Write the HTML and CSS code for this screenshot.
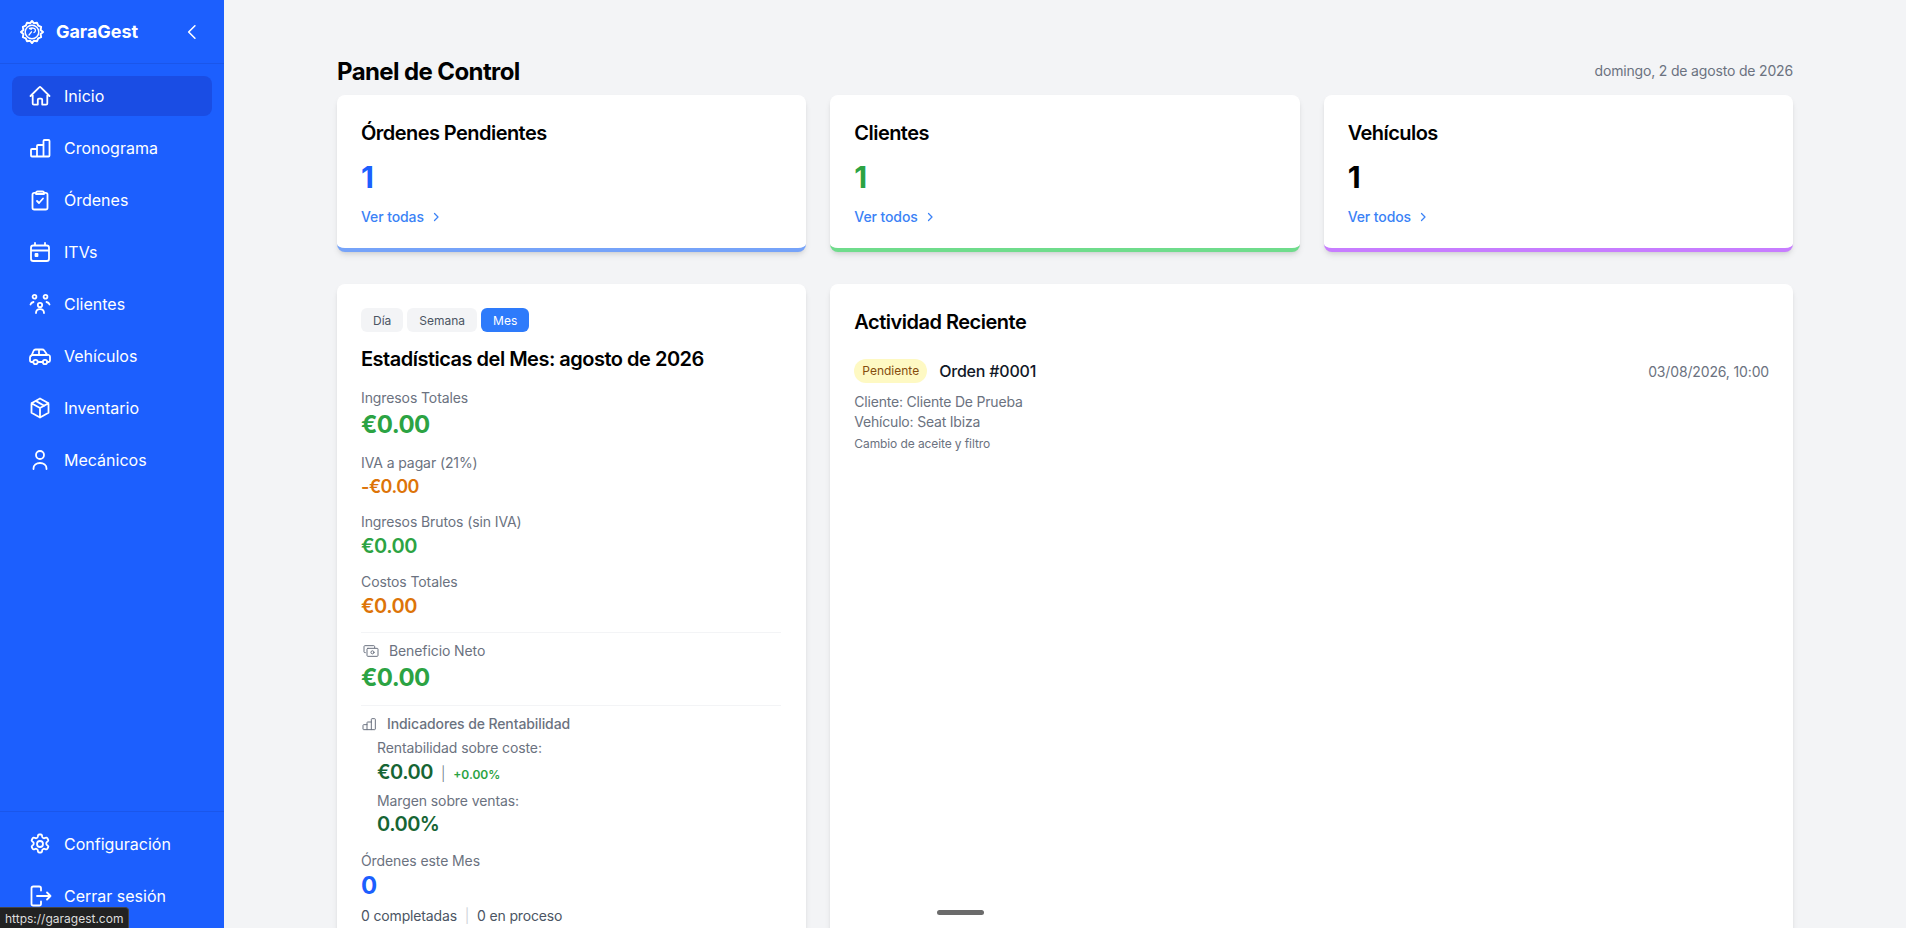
FILE: index.html
```html
<!DOCTYPE html>
<html lang="es">
<head>
    <meta charset="UTF-8">
    <meta name="viewport" content="width=device-width, initial-scale=1.0">
    <title>GaraGest</title>
    <link rel="stylesheet" href="styles.css">
</head>
<body>
<div class="app">
    <aside class="sidebar">
        <div class="brand">
            <div class="brand-left">
                <svg class="logo" viewBox="0 0 24 24" fill="none" stroke="currentColor" stroke-linecap="round" stroke-linejoin="round">
                    <path d="M12 1l2 2.300 3-.5 1.200 2.900 2.900 1.200-.5 3L23 12l-2.400 2.100.5 3-2.900 1.200-1.200 2.900-3-.5L12 23l-2-2.300-3 .5-1.200-2.900-2.900-1.200.5-3L1 12l2.400-2.100-.5-3 2.900-1.200L7 2.800l3 .5z" stroke-width="2"/>
                    <circle cx="12" cy="12" r="6.800" stroke-width="1.500"/>
                    <path d="M9 15l2.500-3.200M11 9.500a2.300 2.300 0 1 1 3 3M9.500 8.500l2.500-.5" stroke-width="1.300"/>
                </svg>
                <span class="brand-name">GaraGest</span>
            </div>
            <svg class="collapse" viewBox="0 0 24 24" fill="none" stroke="currentColor" stroke-width="1.900" stroke-linecap="round" stroke-linejoin="round"><path d="M15.500 4.500L8 12l7.500 7.500"/></svg>
        </div>
        <nav class="nav">
            <a class="nav-item active"><svg viewBox="0 0 24 24"><path d="M2.500 12L11.200 3.300a1.100 1.100 0 0 1 1.600 0L21.500 12M4.700 9.800v9.700c0 .6.500 1.100 1.100 1.100h4V15.700c0-.6.500-1.100 1.100-1.100h2.200c.6 0 1.100.5 1.100 1.100v4.900h4c.6 0 1.100-.5 1.100-1.100V9.800"/></svg>Inicio</a>
            <a class="nav-item"><svg viewBox="0 0 24 24"><path d="M9 13H4c-.6 0-1 .4-1 1v5.500c0 .6.400 1 1 1h16.500c.6 0 1-.4 1-1V5c0-.6-.4-1-1-1h-4c-.6 0-1 .4-1 1v15.500M9 20.500V10c0-.6.400-1 1-1h5.500"/></svg>Cronograma</a>
            <a class="nav-item"><svg viewBox="0 0 24 24"><path d="M9 13l2 2 4-4.500M9.500 3.500h5M9.500 3.500a1.500 1.500 0 0 0-1.500 1.500v1h8V5a1.500 1.500 0 0 0-1.500-1.500M8 4.800H6.300C5.300 4.800 4.500 5.600 4.500 6.600v13.100c0 1 .8 1.800 1.800 1.800h11.400c1 0 1.800-.8 1.800-1.800V6.600c0-1-.8-1.800-1.800-1.800H16"/></svg>Órdenes</a>
            <a class="nav-item"><svg viewBox="0 0 24 24"><path d="M7 3v2.500M17 3v2.500M3 18.700V7.800c0-1.300 1-2.300 2.300-2.300h13.400c1.300 0 2.300 1 2.300 2.300v10.900c0 1.300-1 2.300-2.300 2.300H5.300C4 21 3 20 3 18.700zM3 10.500h18M7.500 14h2v2h-2z"/></svg>ITVs</a>
            <a class="nav-item"><svg viewBox="0 0 24 24"><circle cx="12" cy="13" r="2.200"/><circle cx="6.500" cy="4.800" r="1.900"/><circle cx="17.500" cy="4.800" r="1.900"/><path d="M8 21c0-2.400 1.800-3.800 4-3.800s4 1.400 4 3.800M2.500 12.500c.5-1.500 1.600-2.200 3-2.500M21.500 12.500c-.5-1.500-1.600-2.200-3-2.500"/></svg>Clientes</a>
            <a class="nav-item"><svg viewBox="0 0 24 24"><circle cx="7.500" cy="18" r="2.200"/><circle cx="17" cy="18" r="2.200"/><path d="M5.300 18H3.500A1.500 1.500 0 0 1 2 16.500v-3c0-1 .7-1.800 1.600-2L5.500 7c.4-1 1.300-1.500 2.200-1.500h6.500c.8 0 1.500.3 2 1L19 10.500l1.800.5c.8.3 1.200 1 1.200 1.800v3.700a1.500 1.500 0 0 1-1.500 1.500h-1.300M9.700 18h5.100M3.600 11h15.700M11 5.500V11"/></svg>Vehículos</a>
            <a class="nav-item"><svg viewBox="0 0 24 24"><path d="M12 2.500l8.500 4.700v9.600L12 21.500l-8.500-4.700V7.200zM3.500 7.200L12 12l8.500-4.800M12 12v9.500M7.700 4.900l8.500 4.800"/></svg>Inventario</a>
            <a class="nav-item"><svg viewBox="0 0 24 24"><circle cx="12" cy="7" r="4"/><path d="M5.500 21v-.5c0-3.300 2.900-5.500 6.500-5.500s6.500 2.200 6.500 5.500v.5"/></svg>Mecánicos</a>
        </nav>
        <div class="nav-bottom">
            <a class="nav-item"><svg viewBox="0 0 24 24"><path d="M10 3.400c.1-.5.600-.9 1.100-.9h1.800c.5 0 1 .4 1.100.9l.2 1.500c.1.400.4.700.7.900l.5.300c.3.200.8.200 1.100.1l1.400-.5c.5-.2 1.100 0 1.400.5l.9 1.600c.3.500.1 1-.3 1.400l-1.100.9c-.3.300-.5.700-.5 1.100v.6c0 .4.200.8.500 1.100l1.100.9c.4.300.6.900.3 1.400l-.9 1.600c-.3.500-.9.700-1.400.5l-1.400-.5c-.4-.1-.8-.1-1.100.1l-.5.300c-.3.200-.6.500-.7.900l-.2 1.500c-.1.500-.6.900-1.100.9h-1.800c-.5 0-1-.4-1.100-.9l-.2-1.500c-.1-.4-.4-.7-.7-.9l-.5-.3c-.3-.2-.8-.2-1.100-.1l-1.400.5c-.5.2-1.100 0-1.400-.5l-.9-1.600c-.3-.5-.1-1 .3-1.400l1.100-.9c.3-.3.500-.7.500-1.100v-.6c0-.4-.2-.8-.5-1.100l-1.100-.9c-.4-.3-.6-.9-.3-1.400l.9-1.600c.3-.5.900-.7 1.400-.5l1.400.5c.4.100.8.100 1.100-.1l.5-.3c.3-.2.6-.5.7-.9z"/><circle cx="12" cy="12" r="3"/></svg>Configuración</a>
            <a class="nav-item"><svg viewBox="0 0 24 24"><path d="M13 6.500V4.300c0-1-.8-1.800-1.800-1.800H5.300c-1 0-1.800.8-1.800 1.800v15.400c0 1 .8 1.800 1.800 1.800h5.900c1 0 1.800-.8 1.800-1.800v-2.200M9 12h13.500M19 8.500l3.500 3.500-3.500 3.500"/></svg>Cerrar sesión</a>
        </div>
    </aside>

    <main class="main">
        <div class="content">
            <div class="page-head">
                <h1>Panel de Control</h1>
                <span class="date">domingo, 2 de agosto de 2026</span>
            </div>

            <div class="summary">
                <div class="card summary-card blue">
                    <h2>Órdenes Pendientes</h2>
                    <div class="big-number text-blue">1</div>
                    <a class="more">Ver todas <svg viewBox="0 0 24 24"><path d="M9 5l7 7-7 7"/></svg></a>
                </div>
                <div class="card summary-card green">
                    <h2>Clientes</h2>
                    <div class="big-number text-green">1</div>
                    <a class="more">Ver todos <svg viewBox="0 0 24 24"><path d="M9 5l7 7-7 7"/></svg></a>
                </div>
                <div class="card summary-card purple">
                    <h2>Vehículos</h2>
                    <div class="big-number">1</div>
                    <a class="more">Ver todos <svg viewBox="0 0 24 24"><path d="M9 5l7 7-7 7"/></svg></a>
                </div>
            </div>

            <div class="lower">
                <div class="card stats">
                    <div class="tabs">
                        <button class="tab">Día</button>
                        <button class="tab">Semana</button>
                        <button class="tab tab-active">Mes</button>
                    </div>
                    <h3>Estadísticas del Mes: agosto de 2026</h3>

                    <div class="stat first">
                        <div class="label">Ingresos Totales</div>
                        <div class="value large text-green">€0.00</div>
                    </div>
                    <div class="stat">
                        <div class="label">IVA a pagar (21%)</div>
                        <div class="value small text-orange">-€0.00</div>
                    </div>
                    <div class="stat">
                        <div class="label">Ingresos Brutos (sin IVA)</div>
                        <div class="value text-green">€0.00</div>
                    </div>
                    <div class="stat">
                        <div class="label">Costos Totales</div>
                        <div class="value text-orange">€0.00</div>
                    </div>

                    <div class="section">
                        <div class="label with-icon gap-lg">
                            <svg viewBox="0 0 24 24"><path d="M3.500 14.500H2.800c-.7 0-1.300-.6-1.300-1.300V5.300C1.500 4.600 2.100 4 2.800 4h13.400c.7 0 1.300.6 1.300 1.300V7"/><rect x="6" y="8" width="16.500" height="12" rx="1.300"/><circle cx="14.200" cy="14" r="2.300"/></svg>
                            Beneficio Neto
                        </div>
                        <div class="value large text-green">€0.00</div>
                    </div>

                    <div class="section tight">
                        <div class="label with-icon strong">
                            <svg viewBox="0 0 24 24"><path d="M9 13H4c-.6 0-1 .4-1 1v5.500c0 .6.400 1 1 1h16.500c.6 0 1-.4 1-1V5c0-.6-.4-1-1-1h-4c-.6 0-1 .4-1 1v15.500M9 20.500V10c0-.6.400-1 1-1h5.500"/></svg>
                            Indicadores de Rentabilidad
                        </div>
                        <div class="indent">
                            <div class="label">Rentabilidad sobre coste:</div>
                            <div class="profit-row">
                                <span class="value text-dark">€0.00</span>
                                <span class="sep">|</span>
                                <span class="percent">+0.00%</span>
                            </div>
                            <div class="label margin-label">Margen sobre ventas:</div>
                            <div class="value margin-value text-dark">0.00%</div>
                        </div>
                    </div>

                    <div class="stat orders">
                        <div class="label">Órdenes este Mes</div>
                        <div class="value large text-blue">0</div>
                        <div class="orders-detail">0 completadas <span class="sep-light">|</span> 0 en proceso</div>
                    </div>
                </div>

                <div class="card activity">
                    <h3>Actividad Reciente</h3>
                    <div class="activity-item">
                        <div class="activity-top">
                            <div class="activity-title">
                                <span class="badge">Pendiente</span>
                                <span class="order">Orden #0001</span>
                            </div>
                            <span class="activity-date">03/08/2026, 10:00</span>
                        </div>
                        <div class="activity-line">Cliente: Cliente De Prueba</div>
                        <div class="activity-line">Vehículo: Seat Ibiza</div>
                        <div class="activity-note">Cambio de aceite y filtro</div>
                    </div>
                </div>
            </div>
        </div>
    </main>
</div>

<div class="home-pill"></div>
<div class="status-bubble">https://garagest.com</div>
</body>
</html>
```

FILE: styles.css
```css
* {
    box-sizing: border-box;
}

html, body {
    height: 100%;
    margin: 0;
    overflow: hidden;
}

body {
    font-family: Inter, 'Liberation Sans', sans-serif;
    background-color: #f3f4f6;
    color: #000;
}

h1, h2, h3 {
    margin: 0;
}

.app {
    display: flex;
    height: 928px;
    overflow: hidden;
}

/* sidebar */
.sidebar {
    width: 224px;
    flex-shrink: 0;
    display: flex;
    flex-direction: column;
    background-color: #1c5ffe;
    color: #fff;
}

.brand {
    height: 64px;
    padding: 0 20px;
    display: flex;
    align-items: center;
    justify-content: space-between;
    border-bottom: 1px solid #1a56eb;
}

.brand-left {
    display: flex;
    align-items: center;
    gap: 12px;
}

.logo {
    width: 24px;
    height: 24px;
}

.brand-name {
    font-size: 18px;
    font-weight: 700;
    letter-spacing: -0.05px;
}

.collapse {
    width: 20px;
    height: 20px;
    margin-right: 2px;
}

.nav {
    flex: 1;
    padding: 12px 12px 0;
    display: flex;
    flex-direction: column;
    gap: 12px;
}

.nav-item {
    height: 40px;
    padding: 0 16px;
    display: flex;
    align-items: center;
    gap: 12px;
    border-radius: 8px;
    font-size: 16px;
    line-height: 24px;
    color: #fff;
}

.nav-item svg {
    width: 24px;
    height: 24px;
    fill: none;
    stroke: currentColor;
    stroke-width: 1.8;
    stroke-linecap: round;
    stroke-linejoin: round;
    flex-shrink: 0;
}

.nav-item.active {
    background-color: #1a4de4;
}

.nav-bottom {
    padding: 12px 12px 0;
    height: 117px;
    flex-shrink: 0;
    display: flex;
    flex-direction: column;
    gap: 12px;
    border-top: 1px solid #1a56eb;
}

/* main */
.main {
    flex: 1;
    min-width: 0;
    overflow: hidden;
}

.content {
    width: 1456px;
    margin: 0 auto;
    padding-top: 56px;
}

.page-head {
    height: 39px;
    display: flex;
    align-items: flex-start;
    justify-content: space-between;
}

.page-head h1 {
    font-size: 24px;
    line-height: 32px;
    font-weight: 700;
    letter-spacing: -0.6px;
}

.date {
    font-size: 14px;
    line-height: 30px;
    letter-spacing: -0.17px;
    color: #6b7280;
}

.card {
    background-color: #fff;
    border-radius: 8px;
    box-shadow: 0 4px 6px -1px rgba(0, 0, 0, 0.1), 0 2px 4px -2px rgba(0, 0, 0, 0.1);
}

.summary {
    display: grid;
    grid-template-columns: repeat(3, 1fr);
    gap: 24px;
}

.summary-card {
    height: 157px;
    padding: 24px;
    border-bottom: 4px solid;
}

.summary-card.blue {
    border-bottom-color: #76a3f9;
}

.summary-card.green {
    border-bottom-color: #6fdc8c;
}

.summary-card.purple {
    border-bottom-color: #c77dff;
}

.summary-card h2 {
    font-size: 20px;
    line-height: 28px;
    font-weight: 600;
    letter-spacing: -0.55px;
}

.big-number {
    margin-top: 12px;
    font-size: 30px;
    line-height: 36px;
    font-weight: 700;
}

.more {
    margin-top: 12px;
    display: inline-flex;
    align-items: center;
    gap: 6px;
    font-size: 14px;
    line-height: 20px;
    font-weight: 500;
    letter-spacing: -0.1px;
    color: #3b82f6;
}

.more svg {
    width: 12px;
    height: 12px;
    fill: none;
    stroke: currentColor;
    stroke-width: 2.5;
    stroke-linecap: round;
    stroke-linejoin: round;
}

.text-blue {
    color: #1c5ffe;
}

.text-green {
    color: #2ca343;
}

.text-orange {
    color: #dd7408;
}

.text-dark {
    color: #166534;
}

.lower {
    margin-top: 32px;
    display: grid;
    grid-template-columns: repeat(3, 1fr);
    gap: 24px;
}

.stats {
    padding: 24px;
    height: 720px;
}

.tabs {
    display: flex;
    gap: 4px;
}

.tab {
    height: 24px;
    padding: 0 12px;
    border: none;
    border-radius: 6px;
    background-color: #f3f4f6;
    color: #4b5563;
    font-family: inherit;
    font-size: 12px;
}

.tab-active {
    background-color: #2e7bfb;
    color: #fff;
}

.stats h3 {
    margin-top: 13px;
    font-size: 20px;
    line-height: 28px;
    font-weight: 600;
    letter-spacing: -0.5px;
}

.activity h3 {
    font-size: 20px;
    line-height: 28px;
    font-weight: 600;
    letter-spacing: -0.5px;
}

.stat {
    margin-top: 12px;
}

.stat.first {
    margin-top: 15px;
}

.label {
    font-size: 14px;
    line-height: 20px;
    letter-spacing: -0.1px;
    color: #6b7280;
}

.value {
    font-size: 20px;
    line-height: 28px;
    font-weight: 600;
    letter-spacing: -0.5px;
}

.value.small {
    font-size: 18px;
    line-height: 27px;
}

.value.large {
    margin-top: 1px;
    font-size: 24px;
    line-height: 32px;
    font-weight: 700;
    letter-spacing: -0.6px;
}

.section {
    margin-top: 12px;
    width: 420px;
    padding-top: 8px;
    border-top: 1px solid #f3f4f6;
}

.section.tight {
    margin-top: 11px;
}

.with-icon {
    display: flex;
    align-items: center;
    gap: 10px;
}

.with-icon.gap-lg {
    padding-left: 2px;
}

.with-icon svg {
    width: 16px;
    height: 16px;
    fill: none;
    stroke: #6b7280;
    stroke-width: 1.5;
    stroke-linecap: round;
    stroke-linejoin: round;
}

.with-icon.strong {
    font-weight: 500;
}

.indent {
    margin-top: 4px;
    padding-left: 16px;
}

.profit-row {
    display: flex;
    align-items: baseline;
    gap: 8px;
}

.sep {
    font-size: 14px;
    font-weight: 300;
    color: #6b7280;
}

.percent {
    font-size: 12px;
    line-height: 16px;
    font-weight: 600;
    color: #2ca343;
}

.margin-label {
    margin-top: 5px;
}

.margin-value {
    margin-top: -1px;
}

.orders {
    margin-top: 13px;
}

.orders .value.large {
    margin-top: -1px;
}

.orders-detail {
    font-size: 14px;
    line-height: 20px;
    letter-spacing: -0.15px;
    margin-top: 4px;
    color: #4b5563;
}

.sep-light {
    margin: 0 4px;
    color: #d1d5db;
}

.activity {
    grid-column: span 2;
    padding: 24px;
    height: 720px;
}

.activity-item {
    margin-top: 23px;
}

.activity-top {
    display: flex;
    align-items: center;
    justify-content: space-between;
}

.activity-title {
    display: flex;
    align-items: center;
    gap: 12px;
}

.badge {
    padding: 2px 8px;
    border-radius: 12px;
    background-color: #fef9c3;
    color: #854d0e;
    font-size: 12px;
    line-height: 20px;
}

.order {
    font-size: 16px;
    font-weight: 500;
    letter-spacing: -0.2px;
    color: #111827;
}

.activity-date {
    font-size: 14px;
    letter-spacing: -0.15px;
    color: #6b7280;
}

.activity-line {
    font-size: 14px;
    line-height: 20px;
    letter-spacing: -0.2px;
    color: #6b7280;
}

.activity-top + .activity-line {
    margin-top: 9px;
}

.activity-note {
    margin-top: 4px;
    font-size: 12px;
    line-height: 16px;
    letter-spacing: -0.1px;
    color: #6b7280;
}

/* browser overlays */
.status-bubble {
    position: fixed;
    left: 0;
    bottom: 0;
    height: 21px;
    padding: 0 5px;
    display: flex;
    align-items: center;
    background-color: #222;
    border: 1px solid #444;
    border-left: none;
    border-bottom: none;
    border-radius: 0 4px 0 0;
    color: #ddd;
    font-size: 12px;
}

.home-pill {
    position: fixed;
    left: 937px;
    top: 910px;
    width: 47px;
    height: 5px;
    border-radius: 3px;
    background-color: #6b6b6b;
}
```
